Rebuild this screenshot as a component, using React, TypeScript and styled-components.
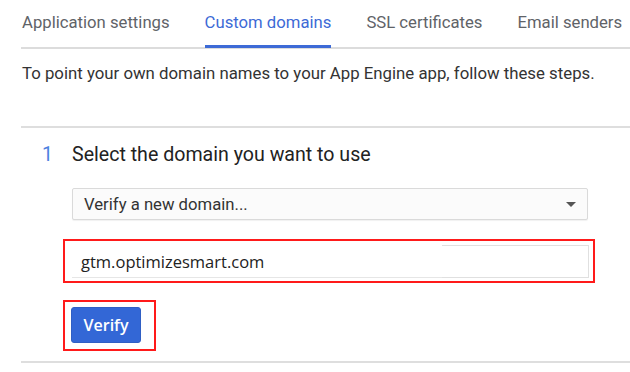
import React from "react";
import styled, { createGlobalStyle } from "styled-components";

const Global = createGlobalStyle`
  html, body { margin: 0; padding: 0; background: #fff; }
  body { font-family: Roboto, "Liberation Sans", Arial, sans-serif; }
  * { box-sizing: border-box; }
`;

const Page = styled.div`
  width: 630px;
  height: 372px;
  overflow: hidden;
  padding-left: 21px;
  display: flex;
  flex-direction: column;
`;

const TabBar = styled.div`
  display: flex;
  gap: 35px;
  padding-top: 11px;
  padding-left: 1px;
  border-bottom: 2px solid #dcdcdc;
`;

const Tab = styled.div<{ $active?: boolean }>`
  font-size: 16.7px;
  line-height: 24px;
  padding-bottom: 10px;
  color: ${(p) => (p.$active ? "#3d6ad6" : "#5f6368")};
  border-bottom: 3px solid ${(p) => (p.$active ? "#3d6ad6" : "transparent")};
  margin-bottom: -1px;
  white-space: nowrap;
`;

const Intro = styled.p`
  margin: 12px 0 0 1px;
  font-size: 16.8px;
  line-height: 24px;
  color: #333;
  white-space: nowrap;
`;

const Divider = styled.div`
  height: 2px;
  background: #dedede;
`;

const TopDivider = styled(Divider)`
  margin-top: 41px;
`;

const Step = styled.div`
  display: grid;
  grid-template-columns: 51px 1fr;
  padding: 15px 41px 0 0;
`;

const StepNumber = styled.div`
  font-size: 19.5px;
  line-height: 24px;
  color: #4c7fe0;
  padding-left: 21px;
`;

const StepBody = styled.div`
  display: flex;
  flex-direction: column;
  align-items: flex-start;
`;

const StepTitle = styled.div`
  font-size: 19.6px;
  line-height: 24px;
  color: #222;
  white-space: nowrap;
`;

const Select = styled.div`
  margin-top: 21px;
  width: 516px;
  height: 32px;
  border: 1px solid #dadada;
  border-radius: 2px;
  box-shadow: 0 1px 1px rgba(0, 0, 0, 0.06);
  background: #fbfbfb;
  display: flex;
  align-items: center;
  justify-content: space-between;
  padding: 0 11px 0 11px;
  font-size: 16.7px;
  color: #333;
`;

const Arrow = styled.span`
  width: 0;
  height: 0;
  border-left: 5px solid transparent;
  border-right: 5px solid transparent;
  border-top: 5px solid #555;
`;

const Highlight = styled.div<{ $pad: string }>`
  border: 2px solid #ff1a1a;
  padding: ${(p) => p.$pad};
  margin-left: -9px;
`;

const InputHighlight = styled(Highlight)`
  margin-top: 19px;
`;

const ButtonHighlight = styled(Highlight)`
  margin-top: 17px;
`;

const DomainInput = styled.div`
  position: relative;
  width: 517px;
  height: 33px;
  border: 1px solid #e0e0e0;
  display: flex;
  align-items: center;
  padding-left: 8px;
  font-family: "Open Sans", "Noto Sans", sans-serif;
  font-size: 16.5px;
  color: #222;

  &::before {
    content: "";
    position: absolute;
    left: -1px;
    top: -1px;
    width: 370px;
    bottom: -1px;
    background: #fff;
    border-bottom: 1px solid #e6e6e6;
  }
`;

const InputText = styled.span`
  position: relative;
`;

const VerifyButton = styled.button`
  width: 70px;
  height: 36px;
  border: 1px solid #2f5fc4;
  border-radius: 3px;
  background: #3367d6;
  color: #fff;
  font-family: "Open Sans", "Noto Sans", sans-serif;
  font-size: 16px;
  font-weight: 600;
  padding: 0;
  display: block;
`;

const BottomDivider = styled(Divider)`
  margin-top: 10px;
`;

export default function App() {
  return (
    <>
      <Global />
      <Page>
        <TabBar>
          <Tab>Application settings</Tab>
          <Tab $active>Custom domains</Tab>
          <Tab>SSL certificates</Tab>
          <Tab>Email senders</Tab>
        </TabBar>
        <Intro>To point your own domain names to your App Engine app, follow these steps.</Intro>
        <TopDivider />
        <Step>
          <StepNumber>1</StepNumber>
          <StepBody>
            <StepTitle>Select the domain you want to use</StepTitle>
            <Select>
              <span>Verify a new domain...</span>
              <Arrow />
            </Select>
            <InputHighlight $pad="4px 4px 3px 7px">
              <DomainInput>
                <InputText>gtm.optimizesmart.com</InputText>
              </DomainInput>
            </InputHighlight>
            <ButtonHighlight $pad="5px 13px 6px 6px">
              <VerifyButton>Verify</VerifyButton>
            </ButtonHighlight>
          </StepBody>
        </Step>
        <BottomDivider />
      </Page>
    </>
  );
}
